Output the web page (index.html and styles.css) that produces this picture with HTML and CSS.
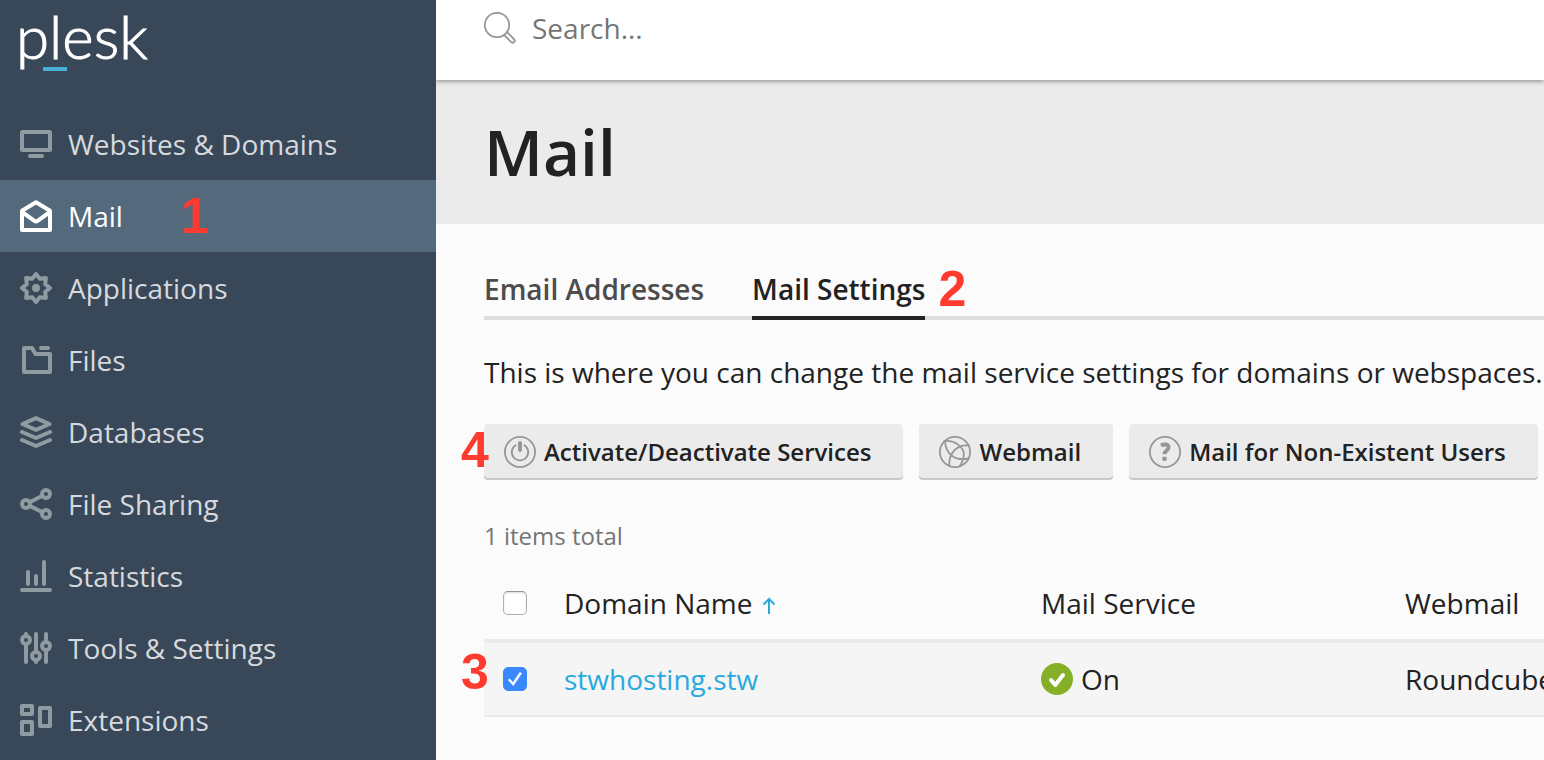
FILE: index.html
```html
<!DOCTYPE html>
<html lang="en">
<head>
<meta charset="utf-8">
<title>Mail - Plesk</title>
<link rel="stylesheet" href="styles.css">
</head>
<body>
<div class="layout">
  <aside class="sidebar">
    <a class="logo" href="#">plesk</a>
    <nav>
      <ul class="nav">
        <li><a class="nav-link" href="#"><svg class="icon" viewBox="0 0 32 32"><rect x="2" y="4" width="28" height="18" rx="0.5"/><path d="M10 28h12"/></svg>Websites &amp; Domains</a></li>
        <li class="marked"><a class="nav-link active" href="#"><svg class="icon" viewBox="0 0 32 32"><path d="M2 10.800 16 2.200 30 10.800V30H2z"/><path d="M2 12 14.500 20.900Q16 22 17.500 20.900L30 12"/></svg>Mail</a><span class="mark mark-nav">1</span></li>
        <li><a class="nav-link" href="#"><svg class="icon" viewBox="0 0 32 32"><path d="M16 2 19.800 6.800 25.900 6.100 25.200 12.200 30 16 25.200 19.800 25.900 25.900 19.800 25.200 16 30 12.200 25.200 6.100 25.900 6.800 19.800 2 16 6.800 12.200 6.100 6.100 12.200 6.800z"/><circle class="solid" cx="16" cy="16" r="4"/></svg>Applications</a></li>
        <li><a class="nav-link" href="#"><svg class="icon" viewBox="0 0 32 32"><path d="M4 4h8l3.500 6H30v18H4zM21 4h7"/></svg>Files</a></li>
        <li><a class="nav-link" href="#"><svg class="icon" viewBox="0 0 32 32"><path d="M16 2.200 29.500 8 16 13.800 2.500 8zM2 16l14 6 14-6M2 24l14 6 14-6"/></svg>Databases</a></li>
        <li><a class="nav-link" href="#"><svg class="icon" viewBox="0 0 32 32"><circle cx="6" cy="16" r="4"/><circle cx="26" cy="6" r="4"/><circle cx="26" cy="26" r="4"/><path d="M9.600 14.200 22.400 7.800M9.600 17.800l12.800 6.400"/></svg>File Sharing</a></li>
        <li><a class="nav-link" href="#"><svg class="icon" viewBox="0 0 32 32"><path d="M2 30h28M8 12v12M16 16v8M24 2v22"/></svg>Statistics</a></li>
        <li><a class="nav-link" href="#"><svg class="icon" viewBox="0 0 32 32"><circle cx="6" cy="8" r="4"/><circle cx="16" cy="24" r="4"/><circle cx="26" cy="14" r="4"/><path d="M6 2v2M6 12v18M16 2v18M16 28v2M26 2v8M26 18v12"/></svg>Tools &amp; Settings</a></li>
        <li><a class="nav-link" href="#"><svg class="icon" viewBox="0 0 32 32"><rect x="2" y="2" width="10" height="8"/><rect x="2" y="18" width="10" height="12"/><rect x="20" y="4" width="10" height="18"/></svg>Extensions</a></li>
      </ul>
    </nav>
  </aside>

  <main class="main">
    <form class="topbar" role="search">
      <label class="search-label" for="search" aria-label="Search"><svg class="icon thin" viewBox="0 0 32 32"><circle cx="13" cy="13" r="12.200"/><path d="m23 20 7.300 7.500a2 2 0 0 1-2.800 2.800L20 23"/></svg></label>
      <input class="search" id="search" type="text" placeholder="Search...">
    </form>
    <header class="heading"><h1>Mail</h1></header>

    <div class="content">
      <ul class="tabs">
        <li><a class="tab" href="#">Email Addresses</a></li>
        <li class="marked"><a class="tab current" href="#">Mail Settings</a><span class="mark mark-tab">2</span></li>
      </ul>
      <p class="intro">This is where you can change the mail service settings for domains or webspaces.</p>

      <div class="toolbar marked">
        <button class="button" type="button"><svg class="icon thin" viewBox="0 0 32 32"><circle cx="16" cy="16" r="15.100"/><path d="M11.600 9.200a8.200 8.200 0 1 0 8.800 0"/><path class="bar" d="M16 7v7"/></svg>Activate/Deactivate Services</button>
        <button class="button" type="button"><svg class="icon thin" viewBox="0 0 32 32"><circle cx="16" cy="16" r="15.100"/><path d="M5.500 5C15 3.500 25 11 24.800 18.500c-.2 4.500-1.500 8-4 11.500M6 5c.5 13 10 20.500 23.500 17.500M30 9.500C18 8 9.500 17 10.300 30"/></svg>Webmail</button>
        <button class="button" type="button"><svg class="icon thin" viewBox="0 0 32 32"><circle cx="16" cy="16" r="15.100"/><path class="query" d="M12 9.500c3.500-2 7.500-1.200 7.500 2 0 3-4 3-4 6.800"/><circle class="solid" cx="15.500" cy="22.800" r="2.400"/></svg>Mail for Non-Existent Users</button>
        <span class="mark mark-toolbar">4</span>
      </div>

      <p class="total">1 items total</p>
      <div class="marked">
        <table class="list">
          <colgroup><col class="col-check"><col class="col-domain"><col class="col-service"><col></colgroup>
          <thead>
            <tr><th><input class="check" type="checkbox" aria-label="Select all"></th><th>Domain Name<svg class="sort" viewBox="0 0 14 18"><path d="M7 18V3M1.500 8.500 7 3l5.500 5.500"/></svg></th><th>Mail Service</th><th>Webmail</th></tr>
          </thead>
          <tbody>
            <tr><td><input class="check" type="checkbox" checked aria-label="Select stwhosting.stw"></td><td><a class="link" href="#">stwhosting.stw</a></td><td><span class="status"><svg class="icon" viewBox="0 0 32 32"><circle class="ok" cx="16" cy="16" r="16"/><path class="tick" d="m10 17 4.300 5 7.700-10"/></svg>On</span></td><td>Roundcube</td></tr>
          </tbody>
        </table>
        <span class="mark mark-row">3</span>
      </div>
    </div>
  </main>
</div>
</body>
</html>
```

FILE: styles.css
```css
* { box-sizing: border-box; }

body {
  margin: 0;
  background: #fbfbfb;
  color: #222;
  font: 28px/40px "Open Sans", sans-serif;
}

a { text-decoration: none; }
ul { margin: 0; padding: 0; list-style: none; }

.layout {
  display: flex;
  min-height: 100vh;
}

.sidebar {
  flex: 0 0 436px;
  background: #394858;
}

.logo {
  position: relative;
  display: block;
  height: 108px;
  padding-left: 16px;
  color: #fff;
  font: 300 60px/72px Lato, sans-serif;
  -webkit-text-stroke: 1px #fff;
}

.logo::after {
  content: "";
  position: absolute;
  top: 67px;
  left: 43px;
  width: 24px;
  height: 4px;
  background: #49b3d6;
}

.nav-link {
  display: flex;
  align-items: center;
  gap: 16px;
  height: 72px;
  padding: 0 20px;
  color: #d6dadf;
}

.nav-link .icon { stroke: #909ba1; }
.nav-link .solid { fill: #909ba1; stroke: none; }

.nav-link.active {
  background: #54697c;
  color: #fff;
}

.nav-link.active .icon { stroke: #fff; }

.icon {
  flex: none;
  display: block;
  width: 32px;
  height: 32px;
  fill: none;
  stroke-width: 4;
  stroke-linecap: round;
  stroke-linejoin: round;
}

.icon.thin {
  stroke: #979797;
  stroke-width: 1.8;
}

.thin .solid { fill: #979797; stroke: none; }
.thin .bar { stroke-width: 4; }
.thin .query { stroke-width: 4; stroke-linecap: butt; }

.main {
  flex: 1;
  min-width: 0;
  overflow: hidden;
}

.topbar {
  position: relative;
  display: flex;
  align-items: center;
  gap: 16px;
  height: 80px;
  padding: 0 48px 24px;
  background: #fff;
  box-shadow: 0 1px 5px rgba(0, 0, 0, 0.45);
}

.search {
  flex: 1;
  min-width: 0;
  padding: 0;
  border: 0;
  outline: 0;
  background: transparent;
  color: #222;
  font: inherit;
}

.search::placeholder { color: #757575; opacity: 1; }

.heading {
  padding: 28px 48px;
  background: #ebebeb;
}

h1 {
  margin: 0;
  font-size: 64px;
  font-weight: 600;
  line-height: 88px;
}

.content { padding: 45px 0 44px 48px; }

.tabs {
  display: flex;
  gap: 48px;
  box-shadow: inset 0 -4px #ddd;
}

.tab {
  display: block;
  padding-bottom: 7px;
  border-bottom: 4px solid transparent;
  color: #4c4c4c;
  font-weight: 600;
}

.tab.current {
  border-color: #222;
  color: #222;
}

.intro {
  margin: 32px 0;
  white-space: nowrap;
}

.toolbar {
  display: flex;
  gap: 16px;
}

.button {
  display: flex;
  align-items: center;
  gap: 8px;
  height: 56px;
  padding: 0 32px 0 20px;
  border: 0;
  border-radius: 4px;
  background: #ebebeb;
  box-shadow: inset 0 -2px #c8c8c8;
  color: #222;
  font: 600 24px/32px "Open Sans", sans-serif;
  white-space: nowrap;
}

.total {
  margin: 40px 0 16px;
  color: #757575;
  font-size: 24px;
  line-height: 32px;
}

.list {
  width: 100%;
  table-layout: fixed;
  border-collapse: separate;
  border-spacing: 0;
}

.col-check { width: 60px; }
.col-domain { width: 477px; }
.col-service { width: 364px; }

.list th,
.list td {
  padding: 16px 0 16px 20px;
  font-weight: 400;
  text-align: left;
  white-space: nowrap;
}

.list th {
  padding-top: 15px;
  border-bottom: 4px solid #ebebeb;
}

.list td {
  border-bottom: 2px solid #ebebeb;
  background: #f5f5f5;
}

.list th:first-child,
.list td:first-child { padding-left: 19px; }

.check {
  appearance: none;
  display: block;
  width: 24px;
  height: 24px;
  margin: 0;
  border: 1px solid #b0b0b0;
  border-top-color: #949494;
  border-radius: 5px;
  background: #fff;
  box-shadow: inset 0 1px 2px rgba(0, 0, 0, 0.15);
}

.check:checked {
  display: grid;
  place-items: center;
  border-color: #3b87fd;
  background: #3b87fd;
  box-shadow: none;
}

.check:checked::before {
  content: "";
  width: 14px;
  height: 14px;
  background: #fff;
  clip-path: polygon(0 57%, 12% 46%, 35% 74%, 84% 0, 100% 9%, 38% 100%);
}

.sort {
  width: 14px;
  height: 18px;
  margin-left: 10px;
  fill: none;
  stroke: #28aade;
  stroke-width: 2;
}

.link { color: #28aade; }

.status {
  display: flex;
  align-items: center;
  gap: 8px;
}

.ok { fill: #84af27; }
.tick { stroke: #fff; }

.marked { position: relative; }

.mark {
  position: absolute;
  color: #ff3b30;
  font: bold 50px/56px "Liberation Sans", Arial, sans-serif;
}

.mark-nav { top: 8px; left: 181px; }
.mark-tab { top: -8px; left: 100%; margin-left: 13px; }
.mark-toolbar { top: -2px; left: -23px; }
.mark-row { top: 76px; left: -23px; }
```
